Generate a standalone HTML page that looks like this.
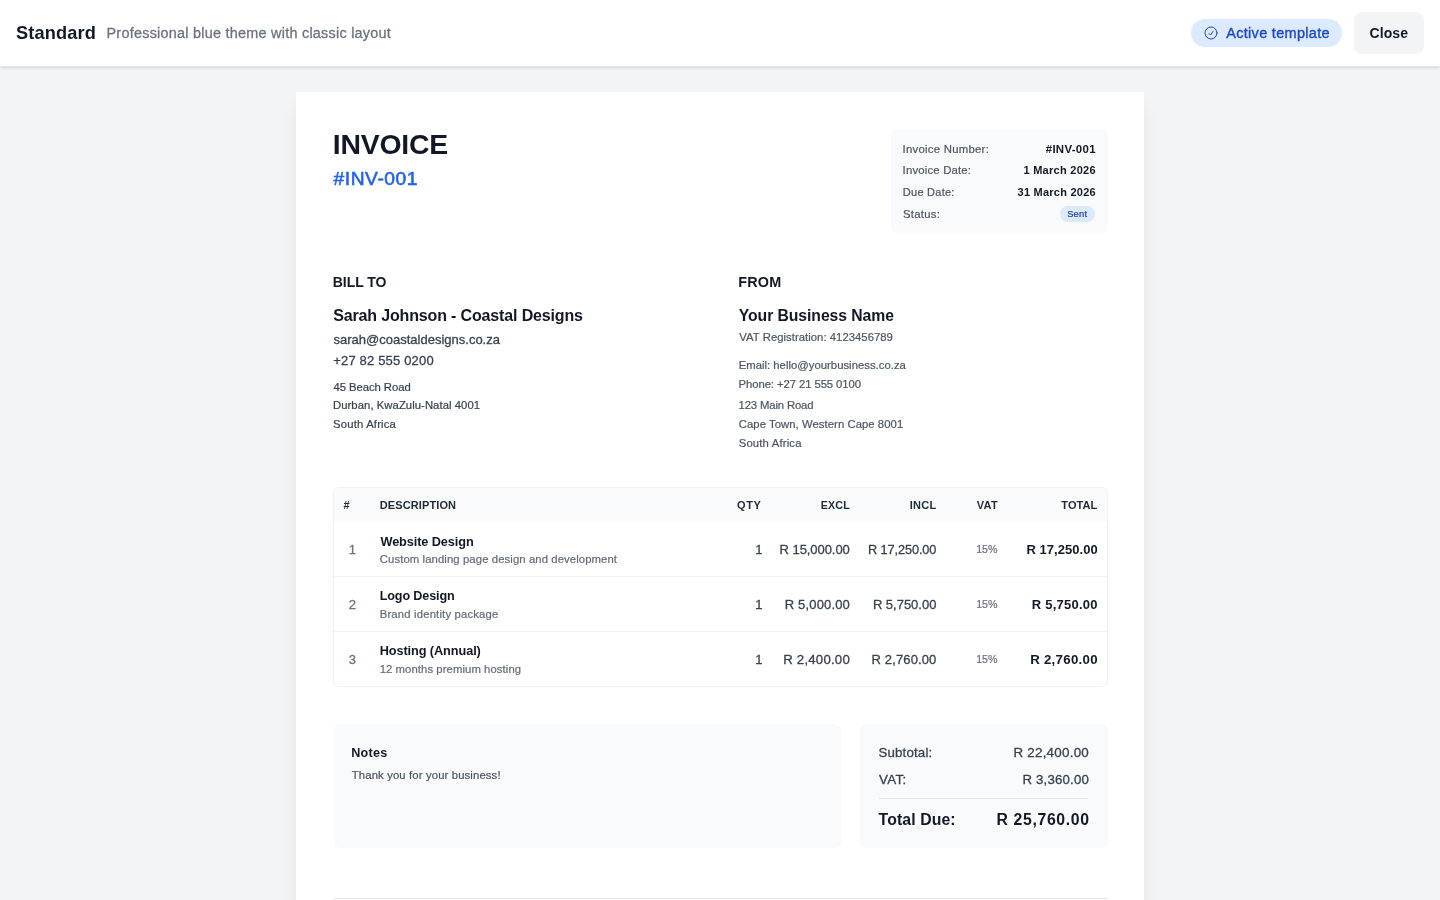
<!DOCTYPE html>
<html lang="en"><head><meta charset="utf-8"><title>Standard - Invoice template preview</title><style>
*{box-sizing:border-box;margin:0;padding:0}
html,body{width:1440px;height:900px;overflow:hidden}
body{background:#f3f4f6;font-family:"Liberation Sans",Arial,sans-serif;color:#111827;position:relative;-webkit-font-smoothing:antialiased}
.t{position:absolute;white-space:pre;display:block;font-weight:400;font-style:normal}
header.top{position:absolute;left:0;top:0;width:1440px;height:67px;background:#fff;border-bottom:1px solid #e5e7eb;box-shadow:0 1px 3px 0 rgba(0,0,0,.1),0 1px 2px -1px rgba(0,0,0,.1);z-index:5;will-change:transform}
.pill{position:absolute;left:1191px;top:19px;width:151px;height:28px;border-radius:14px;background:#dbeafe}
.pill svg{position:absolute;left:12px;top:6px;width:16px;height:16px}
.btn{position:absolute;left:1354px;top:12px;width:70px;height:42px;border-radius:8px;background:#f3f4f6;border:0;font:inherit;cursor:pointer}
main.page{position:absolute;left:296px;top:92px;width:848px;height:900px;background:#fff;box-shadow:0 10px 15px -3px rgba(0,0,0,.1),0 4px 6px -4px rgba(0,0,0,.1);will-change:transform}
.meta{position:absolute;width:217px;height:104px;border-radius:6px;background:#f9fafb}
.badge{position:absolute;width:35.5px;height:16px;border-radius:8px;background:#dbeafe}
.tbl{position:absolute;left:333px;top:487px;width:775px;height:200px;border:1px solid #eff1f3;border-radius:6px;overflow:hidden;background:#fff}
.thead{position:absolute;left:0;top:0;width:100%;height:34px;background:#f9fafb}
.sep{position:absolute;left:0;width:100%;height:1px;background:#eff1f3}
.box{position:absolute;border-radius:6px;background:#f9fafb}
.rule{position:absolute;height:1px}
</style></head><body>
<header class="top">
<h1 class="t" style="left:16.00px;top:24.00px;font-size:18.2px;line-height:18.2px;font-weight:700;letter-spacing:0.143px;color:#111827;">Standard</h1>
<p class="t" style="left:106.50px;top:26.00px;font-size:14.42px;line-height:14.42px;letter-spacing:0.25px;color:#6b7280;-webkit-text-stroke:0.28px #6b7280;">Professional blue theme with classic layout</p>
<div class="pill"><svg viewBox="0 0 24 24" fill="none" stroke="#2342b4" stroke-width="1.45" stroke-linecap="round" stroke-linejoin="round"><circle cx="12" cy="12" r="9"/><path d="M9 12.75 11.25 15 15 9.75"/></svg><span class="t" style="left:35.25px;top:7.00px;font-size:14.49px;line-height:14.49px;letter-spacing:0.304px;color:#1e48c8;-webkit-text-stroke:0.35px #1e48c8;">Active template</span></div>
<button class="btn"><span class="t" style="left:15.55px;top:14.00px;font-size:14.0px;line-height:14.0px;font-weight:700;letter-spacing:0.075px;color:#111827;">Close</span></button>
</header>
<main class="page">
<section>
<h2 class="t" style="left:36.75px;top:38.00px;font-size:28.4px;line-height:28.4px;font-weight:700;letter-spacing:-0.208px;color:#111827;">INVOICE</h2>
<p class="t" style="left:37.60px;top:77.00px;font-size:19.24px;line-height:19.24px;letter-spacing:0.529px;color:#2563eb;-webkit-text-stroke:0.6px #2563eb;">#INV-001</p>
<div class="meta" style="left:595px;top:37px">
<span class="t" style="left:11.62px;top:15.00px;font-size:11.38px;line-height:11.38px;letter-spacing:0.24px;color:#4b5563;-webkit-text-stroke:0.2px #4b5563;">Invoice Number:</span>
<span class="t" style="left:154.72px;top:15.00px;font-size:11.44px;line-height:11.44px;font-weight:700;letter-spacing:0.307px;color:#111827;">#INV-001</span>
<span class="t" style="left:11.60px;top:36.00px;font-size:11.33px;line-height:11.33px;letter-spacing:0.188px;color:#4b5563;-webkit-text-stroke:0.2px #4b5563;">Invoice Date:</span>
<span class="t" style="left:132.45px;top:36.00px;font-size:11.0px;line-height:11.0px;font-weight:700;letter-spacing:0.273px;color:#111827;">1 March 2026</span>
<span class="t" style="left:11.85px;top:58.00px;font-size:11.0px;line-height:11.0px;letter-spacing:0.25px;color:#4b5563;-webkit-text-stroke:0.2px #4b5563;">Due Date:</span>
<span class="t" style="left:126.55px;top:58.00px;font-size:11.0px;line-height:11.0px;font-weight:700;letter-spacing:0.237px;color:#111827;">31 March 2026</span>
<span class="t" style="left:12.05px;top:80.00px;font-size:11.33px;line-height:11.33px;letter-spacing:0.258px;color:#4b5563;-webkit-text-stroke:0.2px #4b5563;">Status:</span>
<span class="badge" style="left:168.75px;top:77px"><span class="t" style="left:7.40px;top:4.00px;font-size:9.3px;line-height:9.3px;letter-spacing:0.267px;color:#1e40af;-webkit-text-stroke:0.2px #1e40af;">Sent</span></span>
</div></section>
<section>
<h3 class="t" style="left:36.75px;top:183.00px;font-size:14.0px;line-height:14.0px;font-weight:700;letter-spacing:-0.05px;color:#111827;">BILL TO</h3>
<p class="t" style="left:37.20px;top:216.00px;font-size:16.0px;line-height:16.0px;font-weight:700;letter-spacing:-0.15px;color:#111827;">Sarah Johnson - Coastal Designs</p>
<p class="t" style="left:37.48px;top:241.00px;font-size:13.0px;line-height:13.0px;letter-spacing:0.004px;color:#374151;-webkit-text-stroke:0.28px #374151;">sarah@coastaldesigns.co.za</p>
<p class="t" style="left:37.25px;top:262.00px;font-size:13.0px;line-height:13.0px;letter-spacing:0.175px;color:#374151;-webkit-text-stroke:0.28px #374151;">+27 82 555 0200</p>
<p class="t" style="left:37.52px;top:290.00px;font-size:11.3px;line-height:11.3px;letter-spacing:-0.058px;color:#374151;-webkit-text-stroke:0.2px #374151;">45 Beach Road</p>
<p class="t" style="left:37.02px;top:308.00px;font-size:11.3px;line-height:11.3px;letter-spacing:0.052px;color:#374151;-webkit-text-stroke:0.2px #374151;">Durban, KwaZulu-Natal 4001</p>
<p class="t" style="left:37.10px;top:327.00px;font-size:11.3px;line-height:11.3px;letter-spacing:0.169px;color:#374151;-webkit-text-stroke:0.2px #374151;">South Africa</p>
</section><section>
<h3 class="t" style="left:442.25px;top:183.00px;font-size:14.42px;line-height:14.42px;font-weight:700;letter-spacing:0.183px;color:#111827;">FROM</h3>
<p class="t" style="left:442.80px;top:216.00px;font-size:15.76px;line-height:15.76px;font-weight:700;letter-spacing:-0.074px;color:#111827;">Your Business Name</p>
<p class="t" style="left:443.35px;top:240.00px;font-size:11.3px;line-height:11.3px;letter-spacing:0.035px;color:#4b5563;-webkit-text-stroke:0.2px #4b5563;">VAT Registration: 4123456789</p>
<p class="t" style="left:442.65px;top:268.00px;font-size:11.3px;line-height:11.3px;letter-spacing:0.021px;color:#4b5563;-webkit-text-stroke:0.2px #4b5563;">Email: hello@yourbusiness.co.za</p>
<p class="t" style="left:442.62px;top:287.00px;font-size:11.3px;line-height:11.3px;letter-spacing:-0.081px;color:#4b5563;-webkit-text-stroke:0.2px #4b5563;">Phone: +27 21 555 0100</p>
<p class="t" style="left:442.52px;top:308.00px;font-size:11.3px;line-height:11.3px;letter-spacing:-0.133px;color:#4b5563;-webkit-text-stroke:0.2px #4b5563;">123 Main Road</p>
<p class="t" style="left:442.75px;top:327.00px;font-size:11.3px;line-height:11.3px;letter-spacing:0.058px;color:#4b5563;-webkit-text-stroke:0.2px #4b5563;">Cape Town, Western Cape 8001</p>
<p class="t" style="left:442.70px;top:346.00px;font-size:11.3px;line-height:11.3px;letter-spacing:0.169px;color:#4b5563;-webkit-text-stroke:0.2px #4b5563;">South Africa</p>
</section>
<div class="tbl" style="left:37px;top:395px">
<div class="thead">
<span class="t" style="left:9.38px;top:12.00px;font-size:11.0px;line-height:11.0px;font-weight:700;color:#1f2937;">#</span>
<span class="t" style="left:45.65px;top:12.00px;font-size:11.0px;line-height:11.0px;font-weight:700;letter-spacing:0.125px;color:#1f2937;">DESCRIPTION</span>
<span class="t" style="left:403.10px;top:12.00px;font-size:11.0px;line-height:11.0px;font-weight:700;letter-spacing:0.625px;color:#1f2937;">QTY</span>
<span class="t" style="left:486.65px;top:12.00px;font-size:10.67px;line-height:10.67px;font-weight:700;letter-spacing:0.25px;color:#1f2937;">EXCL</span>
<span class="t" style="left:575.70px;top:12.00px;font-size:11.0px;line-height:11.0px;font-weight:700;letter-spacing:0.317px;color:#1f2937;">INCL</span>
<span class="t" style="left:642.67px;top:12.00px;font-size:11.0px;line-height:11.0px;font-weight:700;letter-spacing:0.35px;color:#1f2937;">VAT</span>
<span class="t" style="left:727.30px;top:12.00px;font-size:11.0px;line-height:11.0px;font-weight:700;letter-spacing:0.075px;color:#1f2937;">TOTAL</span>
</div>
<div class="row">
<span class="t" style="left:14.65px;top:55.00px;font-size:13.0px;line-height:13.0px;color:#6b7280;-webkit-text-stroke:0.28px #6b7280;">1</span>
<span class="t" style="left:46.45px;top:48.00px;font-size:12.74px;line-height:12.74px;font-weight:700;letter-spacing:-0.1px;color:#111827;">Website Design</span>
<span class="t" style="left:45.82px;top:66.00px;font-size:11.3px;line-height:11.3px;letter-spacing:0.102px;color:#626a78;-webkit-text-stroke:0.2px #626a78;">Custom landing page design and development</span>
<span class="t" style="left:421.25px;top:55.00px;font-size:13.0px;line-height:13.0px;color:#374151;-webkit-text-stroke:0.28px #374151;">1</span>
<span class="t" style="left:445.62px;top:55.00px;font-size:13.0px;line-height:13.0px;letter-spacing:-0.065px;color:#374151;-webkit-text-stroke:0.28px #374151;">R 15,000.00</span>
<span class="t" style="left:534.00px;top:56.00px;font-size:12.74px;line-height:12.74px;letter-spacing:-0.1px;color:#374151;-webkit-text-stroke:0.28px #374151;">R 17,250.00</span>
<span class="t" style="left:642.23px;top:56.00px;font-size:10.67px;line-height:10.67px;letter-spacing:-0.05px;color:#6b7280;-webkit-text-stroke:0.2px #6b7280;">15%</span>
<span class="t" style="left:692.58px;top:55.00px;font-size:13.0px;line-height:13.0px;font-weight:700;letter-spacing:0.02px;color:#111827;">R 17,250.00</span>
</div>
<div class="row">
<span class="t" style="left:14.68px;top:110.00px;font-size:13.0px;line-height:13.0px;color:#6b7280;-webkit-text-stroke:0.28px #6b7280;">2</span>
<span class="t" style="left:45.70px;top:102.00px;font-size:12.61px;line-height:12.61px;font-weight:700;letter-spacing:-0.13px;color:#111827;">Logo Design</span>
<span class="t" style="left:45.70px;top:121.00px;font-size:11.3px;line-height:11.3px;letter-spacing:0.176px;color:#626a78;-webkit-text-stroke:0.2px #626a78;">Brand identity package</span>
<span class="t" style="left:421.25px;top:110.00px;font-size:13.0px;line-height:13.0px;color:#374151;-webkit-text-stroke:0.28px #374151;">1</span>
<span class="t" style="left:450.80px;top:110.00px;font-size:13.0px;line-height:13.0px;letter-spacing:0.155px;color:#374151;-webkit-text-stroke:0.28px #374151;">R 5,000.00</span>
<span class="t" style="left:538.90px;top:110.00px;font-size:13.0px;line-height:13.0px;letter-spacing:-0.012px;color:#374151;-webkit-text-stroke:0.28px #374151;">R 5,750.00</span>
<span class="t" style="left:642.23px;top:111.00px;font-size:10.67px;line-height:10.67px;letter-spacing:-0.05px;color:#6b7280;-webkit-text-stroke:0.2px #6b7280;">15%</span>
<span class="t" style="left:697.70px;top:110.00px;font-size:13.0px;line-height:13.0px;font-weight:700;letter-spacing:0.244px;color:#111827;">R 5,750.00</span>
</div>
<div class="row">
<span class="t" style="left:14.68px;top:165.00px;font-size:13.0px;line-height:13.0px;color:#6b7280;-webkit-text-stroke:0.28px #6b7280;">3</span>
<span class="t" style="left:45.67px;top:157.00px;font-size:12.74px;line-height:12.74px;font-weight:700;letter-spacing:-0.094px;color:#111827;">Hosting (Annual)</span>
<span class="t" style="left:45.65px;top:176.00px;font-size:11.3px;line-height:11.3px;letter-spacing:0.083px;color:#626a78;-webkit-text-stroke:0.2px #626a78;">12 months premium hosting</span>
<span class="t" style="left:421.25px;top:165.00px;font-size:13.0px;line-height:13.0px;color:#374151;-webkit-text-stroke:0.28px #374151;">1</span>
<span class="t" style="left:449.22px;top:165.00px;font-size:13.26px;line-height:13.26px;letter-spacing:0.189px;color:#374151;-webkit-text-stroke:0.28px #374151;">R 2,400.00</span>
<span class="t" style="left:537.50px;top:165.00px;font-size:13.0px;line-height:13.0px;letter-spacing:0.139px;color:#374151;-webkit-text-stroke:0.28px #374151;">R 2,760.00</span>
<span class="t" style="left:642.23px;top:166.00px;font-size:10.67px;line-height:10.67px;letter-spacing:-0.05px;color:#6b7280;-webkit-text-stroke:0.2px #6b7280;">15%</span>
<span class="t" style="left:696.17px;top:165.00px;font-size:13.26px;line-height:13.26px;font-weight:700;letter-spacing:0.283px;color:#111827;">R 2,760.00</span>
</div>
<div class="sep" style="top:88px"></div><div class="sep" style="top:143px"></div>
</div>
<div class="box" style="left:37.5px;top:632px;width:507.5px;height:124px"><h4 class="t" style="left:17.68px;top:23.00px;font-size:12.61px;line-height:12.61px;font-weight:700;letter-spacing:0.238px;color:#111827;">Notes</h4><p class="t" style="left:18.30px;top:46.00px;font-size:11.3px;line-height:11.3px;letter-spacing:0.137px;color:#4b5563;-webkit-text-stroke:0.2px #4b5563;">Thank you for your business!</p></div>
<div class="box" style="left:564.0px;top:632.0px;width:247.5px;height:124.0px">
<span class="t" style="left:18.50px;top:22.00px;font-size:13.32px;line-height:13.32px;letter-spacing:0.144px;color:#374151;-webkit-text-stroke:0.28px #374151;">Subtotal:</span>
<span class="t" style="left:153.40px;top:22.00px;font-size:13.39px;line-height:13.39px;letter-spacing:0.25px;color:#374151;-webkit-text-stroke:0.28px #374151;">R 22,400.00</span>
<span class="t" style="left:19.00px;top:49.00px;font-size:13.39px;line-height:13.39px;letter-spacing:0.3px;color:#374151;-webkit-text-stroke:0.28px #374151;">VAT:</span>
<span class="t" style="left:162.45px;top:49.00px;font-size:13.26px;line-height:13.26px;letter-spacing:0.173px;color:#374151;-webkit-text-stroke:0.28px #374151;">R 3,360.00</span>
<span class="t" style="left:18.58px;top:88.00px;font-size:15.8px;line-height:15.8px;font-weight:700;letter-spacing:0.105px;color:#111827;">Total Due:</span>
<span class="t" style="left:136.45px;top:88.00px;font-size:15.8px;line-height:15.8px;font-weight:700;letter-spacing:0.655px;color:#111827;">R 25,760.00</span>
<div class="rule" style="left:19.0px;top:74.0px;width:209.4px;background:#dfe1e5"></div>
</div>
<div class="rule" style="left:37.5px;top:806px;width:774px;background:#e5e7eb"></div>
</main></body></html>
